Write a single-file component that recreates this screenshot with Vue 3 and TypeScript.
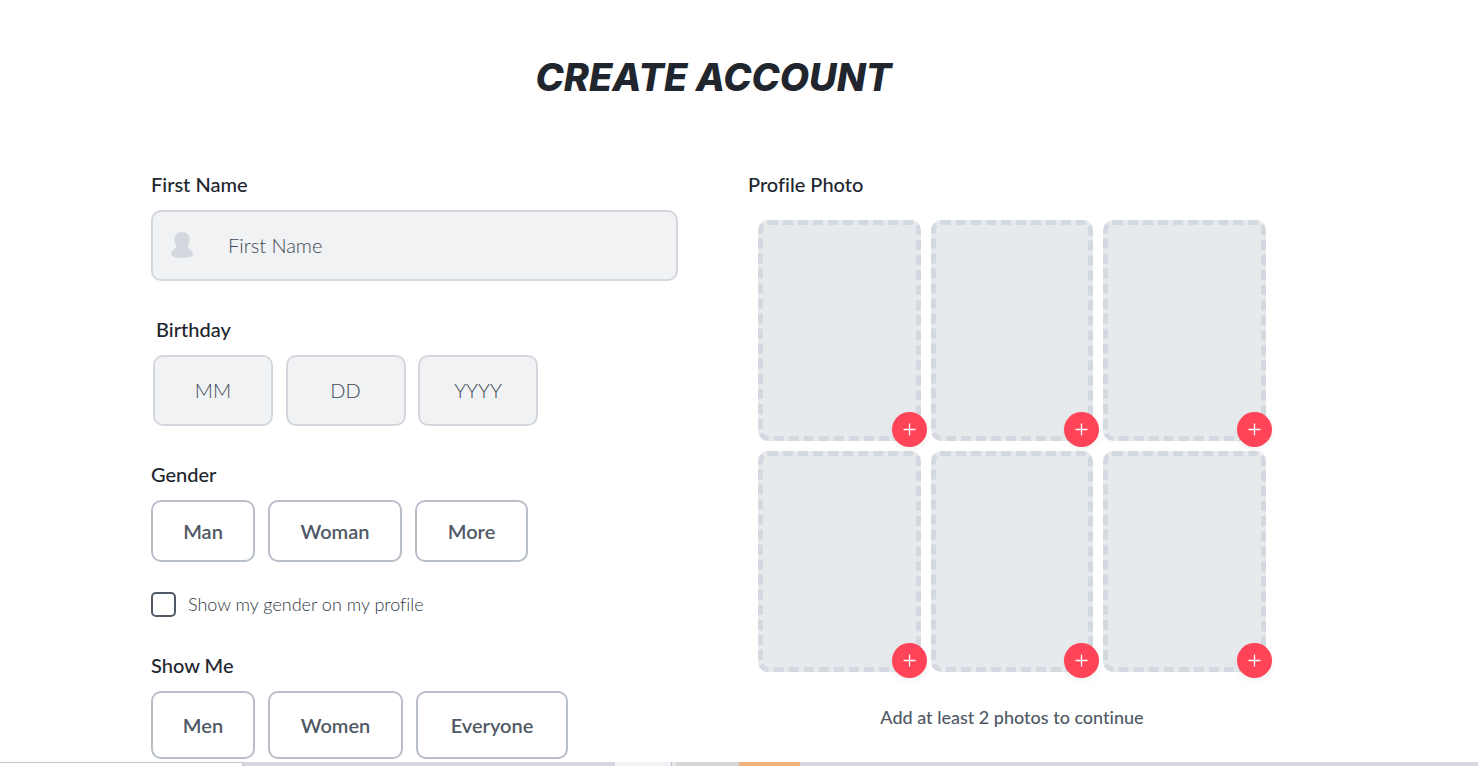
<script setup lang="ts">
import { ref } from 'vue'

interface Choice {
  label: string
  size: string
}

const firstName = ref('')
const birthday = ref<Record<string, string>>({ MM: '', DD: '', YYYY: '' })
const showGender = ref(false)
const gender = ref('')
const showMe = ref('')

const dateParts = [
  { hint: 'MM', name: 'Month', max: 2 },
  { hint: 'DD', name: 'Day', max: 2 },
  { hint: 'YYYY', name: 'Year', max: 4 },
]

const genders: Choice[] = [
  { label: 'Man', size: 'small' },
  { label: 'Woman', size: 'large' },
  { label: 'More', size: 'medium' },
]

const audiences: Choice[] = [
  { label: 'Men', size: 'small' },
  { label: 'Women', size: 'large' },
  { label: 'Everyone', size: 'wide' },
]
</script>

<template>
  <div class="page">
    <main class="account">
      <h1>Create Account</h1>
      <form class="columns" @submit.prevent>
        <div class="details">
          <div class="group">
            <label class="caption" for="first-name">First Name</label>
            <div class="field">
              <svg class="person" viewBox="0 0 22 26" aria-hidden="true">
                <path
                  d="M11 0C6.300 0 3.400 3 3.400 7.200c0 2.600.6 4.600 1.900 6.200.5 1-.1 1.900-1.300 2.900C1.600 18 0 19.800 0 21.900 0 24.700 4.800 26 11 26s11-1.300 11-4.100c0-2.100-1.600-3.900-4-5.600-1.200-1-1.800-1.900-1.300-2.900 1.300-1.600 1.900-3.600 1.900-6.200C18.600 3 15.700 0 11 0z"
                />
              </svg>
              <input id="first-name" v-model="firstName" type="text" placeholder="First Name" />
            </div>
          </div>

          <fieldset class="group">
            <legend class="caption indented">Birthday</legend>
            <div class="dates">
              <input
                v-for="part in dateParts"
                :key="part.hint"
                v-model="birthday[part.hint]"
                class="date"
                type="text"
                inputmode="numeric"
                :maxlength="part.max"
                :placeholder="part.hint"
                :aria-label="part.name"
              />
            </div>
          </fieldset>

          <fieldset class="group">
            <legend class="caption">Gender</legend>
            <div class="choices">
              <button
                v-for="item in genders"
                :key="item.label"
                type="button"
                class="choice"
                :class="[item.size, { picked: gender === item.label }]"
                @click="gender = item.label"
              >
                {{ item.label }}
              </button>
            </div>
            <label class="consent">
              <input v-model="showGender" type="checkbox" />
              <span>Show my gender on my profile</span>
            </label>
          </fieldset>

          <fieldset class="group">
            <legend class="caption">Show Me</legend>
            <div class="choices tall">
              <button
                v-for="item in audiences"
                :key="item.label"
                type="button"
                class="choice"
                :class="[item.size, { picked: showMe === item.label }]"
                @click="showMe = item.label"
              >
                {{ item.label }}
              </button>
            </div>
          </fieldset>
        </div>

        <section class="photos" aria-labelledby="photo-title">
          <h2 id="photo-title" class="caption">Profile Photo</h2>
          <div class="grid">
            <div v-for="slot in 6" :key="slot" class="slot">
              <button type="button" class="add" :aria-label="`Add photo ${slot}`">
                <svg viewBox="0 0 13 13" aria-hidden="true">
                  <path d="M6.500 .5v12M.5 6.500h12" />
                </svg>
              </button>
            </div>
          </div>
          <p class="note">Add at least 2 photos to continue</p>
        </section>
      </form>
    </main>

    <footer class="strip" aria-hidden="true">
      <span class="tab"></span>
      <span class="fill"></span>
      <span class="pale"></span>
      <span class="edge"></span>
      <span class="warm"></span>
      <span class="orange"></span>
    </footer>
  </div>
</template>

<style>
body {
  margin: 0;
  background: #fff;
}
</style>

<style scoped>
.page {
  display: flex;
  flex-direction: column;
  min-height: 100vh;
  font-family: Lato, 'Open Sans', sans-serif;
  font-variant-ligatures: none;
  color: #21262e;
}

.page *,
.page {
  box-sizing: border-box;
}

.account {
  flex: 1;
  padding: 52px 202px 3px 151px;
}

h1 {
  margin: 0 0 71px;
  font-family: Inter, Lato, sans-serif;
  font-size: 38px;
  line-height: 50px;
  font-weight: 800;
  font-style: italic;
  text-align: center;
  text-transform: uppercase;
}

.columns {
  display: grid;
  grid-template-columns: 527fr 528fr;
  gap: 70px;
}

.details {
  display: flex;
  flex-direction: column;
  gap: 37px;
}

.group {
  min-width: 0;
  margin: 0;
  padding: 0;
  border: 0;
}

.caption {
  display: block;
  margin: 0 0 15px;
  padding: 0;
  font-size: 20px;
  line-height: 22px;
  font-weight: 500;
}

.indented {
  padding-left: 5px;
}

.field {
  display: flex;
  align-items: center;
  height: 71px;
  padding: 0 0 2px 18px;
  border: 2px solid #d4d8de;
  border-radius: 10px;
  background: #f0f2f4;
}

.person {
  flex: none;
  width: 22px;
  height: 26px;
  fill: #d4d8de;
}

input {
  font-family: inherit;
  font-size: 20px;
  font-weight: 300;
  color: #3f4854;
}

input::placeholder {
  color: #3f4854;
  opacity: 1;
}

.field input {
  flex: 1;
  min-width: 0;
  height: 100%;
  padding: 0 16px 0 35px;
  border: 0;
  outline: 0;
  background: transparent;
}

.dates {
  display: flex;
  justify-content: space-between;
  width: 387px;
  padding-left: 2px;
}

.date {
  width: 120px;
  height: 71px;
  padding: 0 0 2px;
  border: 2px solid #d4d8de;
  border-radius: 10px;
  background: #f0f2f4;
  text-align: center;
}

.choices {
  display: flex;
  gap: 13px;
}

.choice {
  height: 62px;
  padding: 0;
  border: 2px solid #b9bfc9;
  border-radius: 10px;
  background: #fff;
  font-family: inherit;
  font-size: 20px;
  font-weight: 600;
  color: #505965;
  cursor: pointer;
}

.small {
  width: 104px;
}

.medium {
  width: 113px;
}

.large {
  width: 134px;
}

.wide {
  width: 152px;
}

.tall .choice {
  height: 68px;
}

.tall .large {
  width: 135px;
}

.picked {
  border-color: #ff4458;
}

.consent {
  display: flex;
  align-items: center;
  gap: 12px;
  margin-top: 30px;
  font-size: 18px;
  line-height: 25px;
  font-weight: 300;
  color: #303945;
}

.consent input {
  appearance: none;
  width: 25px;
  height: 25px;
  margin: 0;
  border: 2px solid #505965;
  border-radius: 5px;
  background: #fff;
}

.consent input:checked {
  background: #ff4458;
}

.photos .caption {
  margin-bottom: 25px;
}

.grid {
  display: grid;
  grid-template-columns: repeat(3, 1fr);
  gap: 10px;
  padding: 0 10px;
}

.slot {
  position: relative;
  height: 221px;
  border: 5px dashed #d4d8e0;
  border-radius: 10px;
  background: #e6eaed;
}

.add {
  position: absolute;
  right: -11px;
  bottom: -11px;
  display: grid;
  place-items: center;
  width: 35px;
  height: 35px;
  padding: 0;
  border: 0;
  border-radius: 50%;
  background: #ff4458;
  box-shadow: 0 3px 6px rgba(0, 0, 0, 0.06);
  cursor: pointer;
}

.add svg {
  width: 13px;
  height: 13px;
  fill: none;
  stroke: #fff;
  stroke-width: 1.3;
}

.note {
  margin: 33px 0 0;
  font-size: 18px;
  line-height: 24px;
  font-weight: 500;
  text-align: center;
  color: #505965;
}

.strip {
  display: flex;
  height: 4px;
  background: #d6d7df;
}

.tab {
  width: 243px;
  border-top: 1px solid #c4c4c6;
  border-right: 1px solid #c4c4c6;
  background: #fff;
}

.fill {
  width: 372px;
}

.pale {
  width: 57px;
  border-right: 1px solid #c4c4cc;
  background: #f1f2f5;
}

.edge {
  width: 4px;
  background: #e6e6ea;
}

.warm {
  width: 63px;
  background: #d9d6da;
}

.orange {
  width: 61px;
  background: #f0b37b;
}
</style>
